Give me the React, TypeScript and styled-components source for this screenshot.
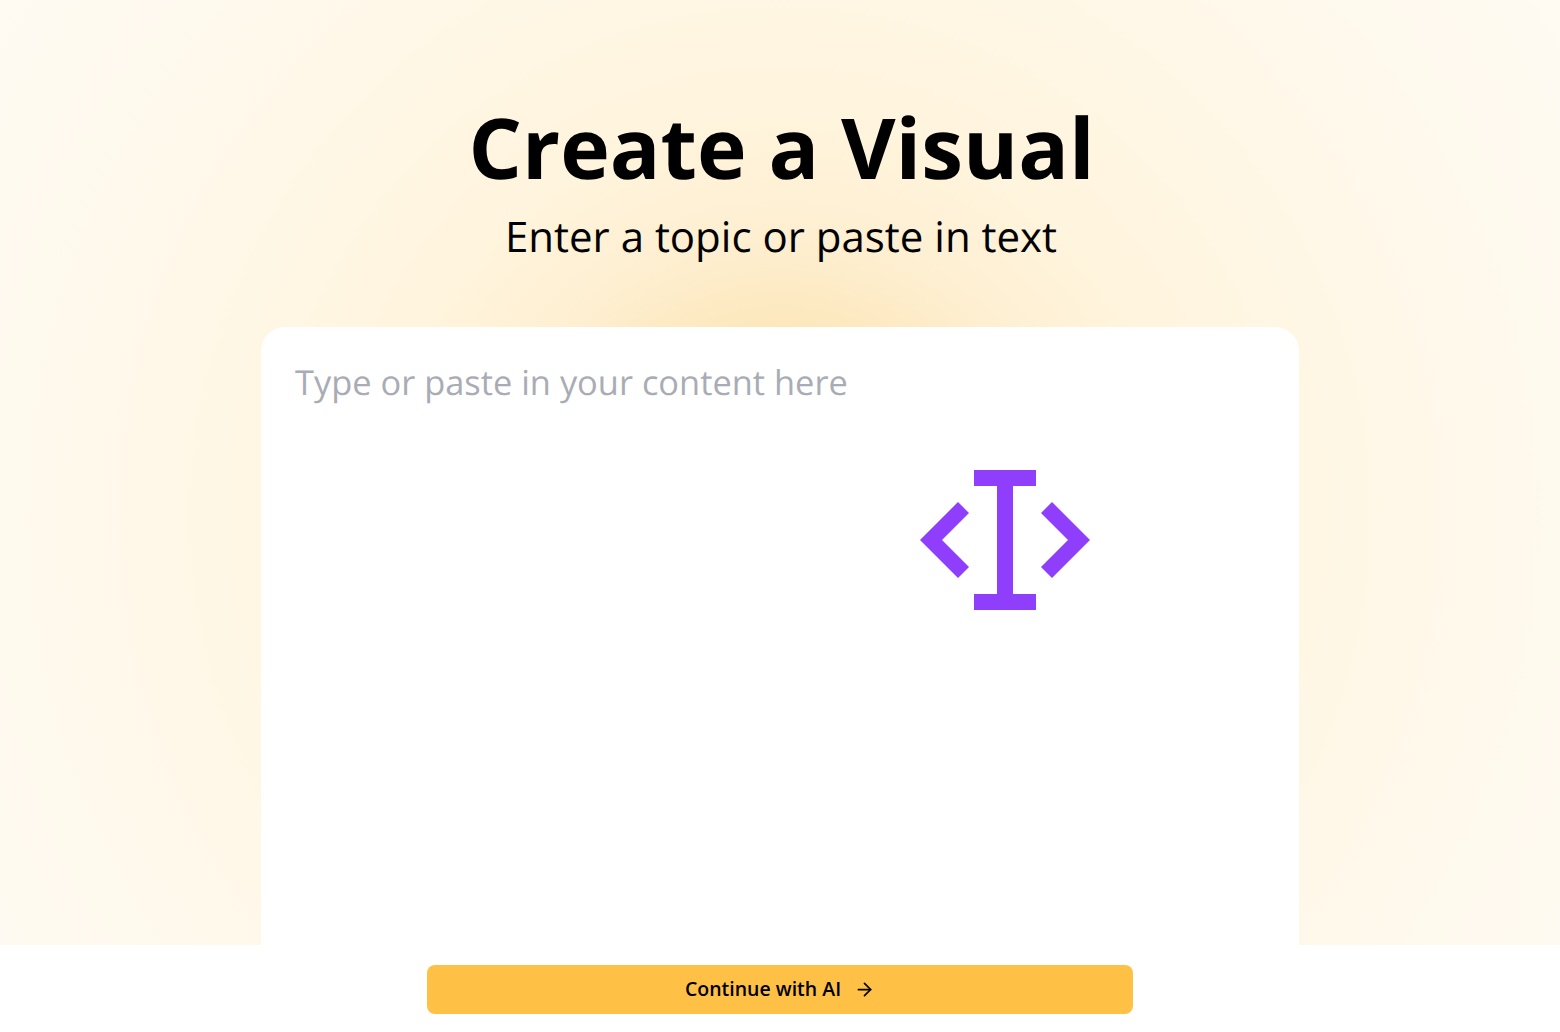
import React from 'react';
import styled, { createGlobalStyle } from 'styled-components';
import { ArrowRight } from 'lucide-react';

const GlobalStyle = createGlobalStyle`
	html, body {
		margin: 0;
		height: 100%;
		background: #fff;
		font-family: 'Open Sans', 'Noto Sans', sans-serif;
		text-rendering: geometricPrecision;
	}
`;

const Page = styled.div`
	position: relative;
	display: flex;
	flex-direction: column;
	width: 100%;
	height: 1032px;
	overflow: hidden;
`;

const Hero = styled.main`
	flex: 1;
	min-height: 0;
	display: flex;
	flex-direction: column;
	align-items: center;
	overflow: hidden;
	background: radial-gradient(
		circle 930px at 50% 516px,
		#fbdc9c 0,
		#fde8bd 190px,
		#feefd1 280px,
		#fff4dd 400px,
		#fff6e3 520px,
		#fff9ec 700px,
		#fffaf2 930px
	);
`;

const Title = styled.h1`
	margin: 95px 0 0 3px;
	font-size: 84px;
	line-height: 104px;
	font-weight: 700;
	color: #000;
	letter-spacing: 0;
`;

const Subtitle = styled.p`
	margin: 10px 0 0 2px;
	font-size: 42px;
	line-height: 56px;
	font-weight: 400;
	color: #000;
`;

const Card = styled.div`
	flex: 1;
	width: 1038px;
	margin-top: 62px;
	padding: 32px 34px;
	box-sizing: border-box;
	background: #fff;
	border-radius: 24px 24px 0 0;
`;

const Placeholder = styled.div`
	font-size: 34.4px;
	line-height: 48px;
	color: #a9acb5;
`;

const CursorIcon = styled.svg`
	position: absolute;
	left: 920px;
	top: 470px;
	width: 170px;
	height: 140px;
	fill: #8f3ffc;
`;

const Footer = styled.footer`
	flex: none;
	height: 87px;
	display: flex;
	justify-content: center;
	padding-top: 20px;
	box-sizing: border-box;
	background: #fff;
`;

const ContinueButton = styled.button`
	width: 706px;
	height: 49px;
	padding: 0 0 3px 0;
	display: flex;
	align-items: center;
	justify-content: center;
	gap: 13px;
	border: 0;
	border-radius: 8px;
	background: #ffc046;
	color: #000;
	font-family: inherit;
	font-size: 19.5px;
	font-weight: 600;
	cursor: pointer;
`;

const Arrow = styled(ArrowRight)`
	margin-top: 2px;
`;

const App: React.FC = () => (
	<Page>
		<GlobalStyle />
		<Hero>
			<Title>Create a Visual</Title>
			<Subtitle>Enter a topic or paste in text</Subtitle>
			<Card>
				<Placeholder>Type or paste in your content here</Placeholder>
			</Card>
		</Hero>
		<Footer>
			<ContinueButton>
				Continue with AI
				<Arrow size={21} strokeWidth={2} />
			</ContinueButton>
		</Footer>
		<CursorIcon viewBox='0 0 170 140'>
			<path d='M54 0h62v16H93v108h23v16H54v-16h23V16H54z' />
			<path d='M38 32l11 11-27 27 27 27-11 11L0 70z' />
			<path d='M132 32l-11 11 27 27-27 27 11 11 38-38z' />
		</CursorIcon>
	</Page>
);

export default App;
